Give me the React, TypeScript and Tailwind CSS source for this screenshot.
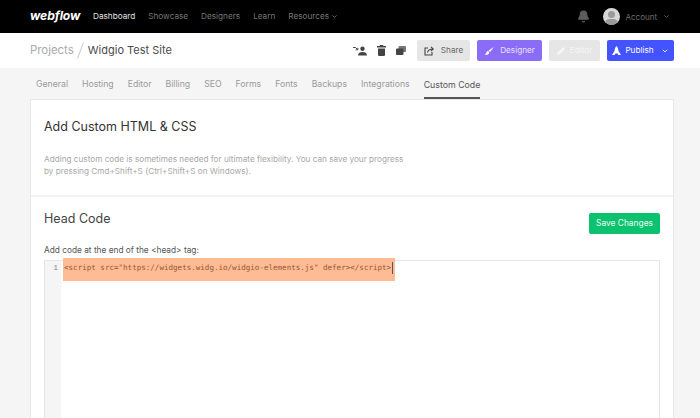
import { ChevronDown, Bell } from 'lucide-react';

const navLinks = ['Showcase', 'Designers', 'Learn'];
const tabs = ['General', 'Hosting', 'Editor', 'Billing', 'SEO', 'Forms', 'Fonts', 'Backups', 'Integrations'];

export default function App() {
  return (
    <div className="h-[418px] w-[700px] overflow-hidden bg-[#f5f5f5] font-['Inter',sans-serif]">
      {/* Top nav */}
      <div className="flex h-[33px] items-center bg-black pl-[30px] pr-[30px]">
        <span className="mr-[13px] w-[50px] text-[12.2px] font-bold italic tracking-[-0.1px] text-white">webflow</span>
        <span className="mr-[13px] text-[8.2px] text-[#e4e4e4]">Dashboard</span>
        {navLinks.map((l) => (
          <span key={l} className="mr-[13px] text-[8.2px] text-[#777777]">
            {l}
          </span>
        ))}
        <span className="flex items-center gap-[2px] text-[8.2px] text-[#777777]">
          Resources <ChevronDown size={7} strokeWidth={3} />
        </span>
        <div className="ml-auto flex items-center">
          <Bell size={13} className="mr-[13px] fill-[#5c5c5c] text-[#5c5c5c]" />
          <div className="relative mr-[5px] h-[17px] w-[17px] overflow-hidden rounded-full bg-[#d8d8d8]">
            <div className="absolute left-[5px] top-[3px] h-[7px] w-[7px] rounded-full bg-[#9a9a9a]" />
            <div className="absolute left-[2px] top-[11px] h-[9px] w-[13px] rounded-full bg-[#9a9a9a]" />
          </div>
          <span className="mr-[6px] text-[8px] text-[#6e6e6e]">Account</span>
          <ChevronDown size={7} strokeWidth={3} className="text-[#6e6e6e]" />
        </div>
      </div>

      {/* Project header */}
      <div className="flex h-[35px] items-center bg-white pl-[30px] pr-[26px]">
        <span className="text-[11.4px] text-[#aaaaaa]">Projects</span>
        <div className="mx-[6.500px] h-[17px] w-px rotate-[20deg] bg-[#cccccc]" />
        <span className="text-[11px] text-[#4a4a4a]">Widgio Test Site</span>
        <div className="ml-auto flex items-center">
          <svg width="14" height="10" viewBox="0 0 14 10" className="mr-[10px]">
            <circle cx="9.5" cy="2.8" r="2.2" fill="#444" />
            <path d="M5 9.5c0-2.4 2-3.5 4.500-3.500S14 7.100 14 9.500z" fill="#444" />
            <path d="M0 1.500h2.500l2 2M4.800 1.800v2h-2" fill="none" stroke="#444" strokeWidth="1" />
          </svg>
          <svg width="9" height="11" viewBox="0 0 9 11" className="mr-[10px]">
            <path d="M3 0h3l.5 1H9v1.500H0V1h2.500zM1 3.500h7V10a1 1 0 0 1-1 1H2a1 1 0 0 1-1-1z" fill="#444" />
          </svg>
          <svg width="10" height="9" viewBox="0 0 10 9" className="mr-[11px]">
            <rect x="2.500" y="0" width="7.500" height="6" rx="1" fill="#777" />
            <rect x="0" y="2.500" width="7.500" height="6.500" rx="1" fill="#444" />
          </svg>
          <button className="mr-[7px] flex h-[21px] w-[53px] items-center justify-center gap-[7px] rounded-[2px] bg-[#e6e6e6] text-[8.200px] text-[#666666]">
            <svg width="10" height="10" viewBox="0 0 10 10" fill="none" stroke="#444" strokeWidth="1.100">
              <path d="M4 2H1v7h7V6" />
              <path d="M3.500 6.500C4 4 5.500 3 9 3M7 .8 9.300 3 7 5.200" />
            </svg>
            Share
          </button>
          <button className="mr-[7px] flex h-[21px] w-[65px] items-center justify-center gap-[6px] rounded-[2px] bg-[#8b6cf6] text-[8.200px] text-[#e8e0ff]">
            <svg width="10" height="8" viewBox="0 0 10 8" fill="white">
              <path d="M10 0 4.500 3.500 6 5zM4 4C2.500 4 2.500 5.500 2 6.500 1.700 7 .8 7.300 0 7.300 1.500 8 4 8 5 6.500 5.400 5.500 5 4.500 4 4z" />
            </svg>
            Designer
          </button>
          <button className="mr-[7px] flex h-[21px] w-[51px] items-center justify-center gap-[5px] rounded-[2px] bg-[#e6e6e6] text-[8.200px] text-[#f5f5f5]">
            <svg width="8" height="8" viewBox="0 0 8 8" fill="#f5f5f5">
              <path d="M6 0l2 2-5.500 5.500L0 8l.5-2.500z" />
            </svg>
            Editor
          </button>
          <button className="flex h-[21px] w-[67px] items-center justify-center gap-[4px] rounded-[2px] bg-[#4353ff] text-[8.200px] text-white">
            <svg width="9" height="10" viewBox="0 0 9 10">
              <path d="M4.500 0C5.700 1 6.300 2.800 6.500 5L9 9H6.500L5.500 7.500h-2L2.500 9H0l2.500-4C2.700 2.800 3.300 1 4.500 0z" fill="white" />
            </svg>
            Publish
            <ChevronDown size={8} strokeWidth={2.500} className="ml-[3px]" />
          </button>
        </div>
      </div>

      {/* Tabs */}
      <div className="flex h-[31px] items-stretch gap-[14px] pl-[36px] pt-[3px]">
        {tabs.map((t) => (
          <span key={t} className="flex items-center text-[8.700px] text-[#9a9a9a]">
            {t}
          </span>
        ))}
        <span className="flex items-center border-t-2 border-b-2 border-t-transparent border-b-[#555555] text-[8.800px] text-[#555555]">Custom Code</span>
      </div>

      {/* Main card */}
      <div className="relative mx-[30px] h-[320px] w-[644px] border border-[#e8e8e8] bg-white">
        <div className="h-[97px] border-b-2 border-[#f3f3f3] px-[13px] pt-[18px]">
          <h2 className="text-[12.500px] leading-[17px] text-[#333333]">Add Custom HTML &amp; CSS</h2>
          <p className="mt-[18px] text-[8.200px] leading-[12px] text-[#a8a8a8]">
            Adding custom code is sometimes needed for ultimate flexibility. You can save your progress
            <br />
            by pressing Cmd+Shift+S (Ctrl+Shift+S on Windows).
          </p>
        </div>
        <div className="px-[13px]">
          <div className="flex items-start justify-between pt-[16px]">
            <h2 className="mt-[-3px] text-[12.500px] leading-[17px] text-[#444444]">Head Code</h2>
            <button className="h-[21px] w-[71px] rounded-[2px] bg-[#0dc26e] text-[8.400px] text-[#e8fff3]">Save Changes</button>
          </div>
          <div className="mt-[10px] text-[8.300px] leading-[12px] text-[#555555]">Add code at the end of the &lt;head&gt; tag:</div>
          <div className="relative mt-[4px] flex h-[200px] w-[616px] border border-[#e6e6e6]">
            <div className="w-[16px] bg-[#f5f5f5] pr-[3px] pt-[1px] text-right font-['Liberation_Mono',monospace] text-[8px] leading-[12px] text-[#888888]">
              1
            </div>
            {/* highlight over the first code line */}
            <div className="absolute left-[18px] top-[-3px] flex h-[23px] w-[332px] items-start bg-[#ffbb94] pl-[1px] pt-[4px] font-['DejaVu_Sans_Mono',monospace] text-[7.560px] leading-[12px] text-[#8f5a38]">
              &lt;script src="https://widgets.widg.io/widgio-elements.js" defer&gt;&lt;/script&gt;
              <span className="ml-[1px] h-[12px] w-px bg-[#555555]" />
            </div>
          </div>
        </div>
      </div>
    </div>
  );
}
